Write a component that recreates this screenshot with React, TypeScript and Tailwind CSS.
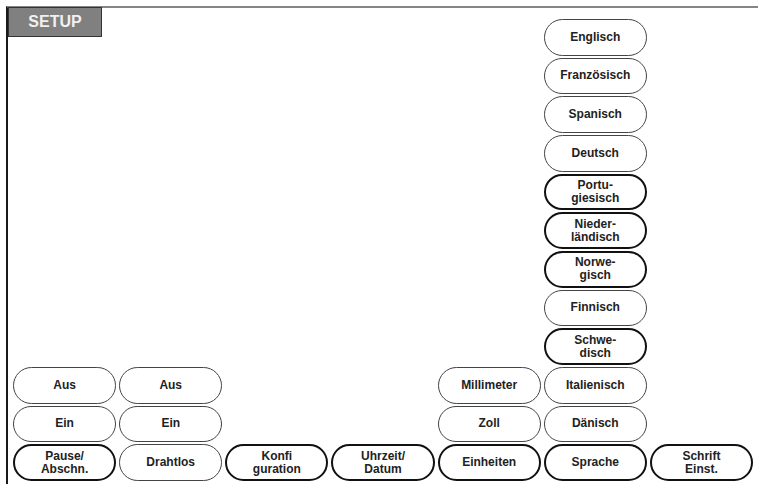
import React from "react";

type Btn = {
  label: string[];
  col: string;
  row: string;
  bold?: boolean;
};

const buttons: Btn[] = [
  { label: ["Englisch"], col: "col-start-6", row: "row-start-1" },
  { label: ["Französisch"], col: "col-start-6", row: "row-start-2" },
  { label: ["Spanisch"], col: "col-start-6", row: "row-start-3" },
  { label: ["Deutsch"], col: "col-start-6", row: "row-start-4" },
  { label: ["Portu-", "giesisch"], col: "col-start-6", row: "row-start-5", bold: true },
  { label: ["Nieder-", "ländisch"], col: "col-start-6", row: "row-start-6", bold: true },
  { label: ["Norwe-", "gisch"], col: "col-start-6", row: "row-start-7", bold: true },
  { label: ["Finnisch"], col: "col-start-6", row: "row-start-8" },
  { label: ["Schwe-", "disch"], col: "col-start-6", row: "row-start-9", bold: true },
  { label: ["Italienisch"], col: "col-start-6", row: "row-start-10" },
  { label: ["Dänisch"], col: "col-start-6", row: "row-start-11" },
  { label: ["Sprache"], col: "col-start-6", row: "row-start-12", bold: true },

  { label: ["Aus"], col: "col-start-1", row: "row-start-10" },
  { label: ["Ein"], col: "col-start-1", row: "row-start-11" },
  { label: ["Pause/", "Abschn."], col: "col-start-1", row: "row-start-12", bold: true },

  { label: ["Aus"], col: "col-start-2", row: "row-start-10" },
  { label: ["Ein"], col: "col-start-2", row: "row-start-11" },
  { label: ["Drahtlos"], col: "col-start-2", row: "row-start-12" },

  { label: ["Konfi", "guration"], col: "col-start-3", row: "row-start-12", bold: true },
  { label: ["Uhrzeit/", "Datum"], col: "col-start-4", row: "row-start-12", bold: true },

  { label: ["Millimeter"], col: "col-start-5", row: "row-start-10" },
  { label: ["Zoll"], col: "col-start-5", row: "row-start-11" },
  { label: ["Einheiten"], col: "col-start-5", row: "row-start-12", bold: true },

  { label: ["Schrift", "Einst."], col: "col-start-7", row: "row-start-12", bold: true },
];

function PillButton({ label, col, row, bold }: Btn) {
  return (
    <button
      className={`${col} ${row} flex flex-col items-center justify-center rounded-full bg-white text-[12px] font-bold leading-[13px] text-[#222] ${
        bold ? "border-2 border-[#111]" : "border border-[#444]"
      }`}
    >
      {label.map(line => (
        <span key={line}>{line}</span>
      ))}
    </button>
  );
}

export default function App() {
  return (
    <div className="h-[484px] w-[758px] overflow-hidden bg-white pl-[6px] pt-[6px]" style={{ fontFamily: '"Liberation Sans", Arial, sans-serif' }}>
      <div className="relative h-full border-l-2 border-t-2 border-l-[#1a1a1a] border-t-[#858585] pl-[5px] pt-[11px]">
        <div className="absolute -top-[1px] left-0 flex h-[30px] w-[94px] items-center justify-center border border-[#333] bg-[#808080] text-[16px] font-bold text-[#f0f0f0]">
          SETUP
        </div>
        <div className="grid h-[462px] w-[740px] grid-cols-7 grid-rows-12 gap-x-[3px] gap-y-[2px]">
          {buttons.map(b => (
            <PillButton key={b.col + b.row} {...b} />
          ))}
        </div>
      </div>
    </div>
  );
}
